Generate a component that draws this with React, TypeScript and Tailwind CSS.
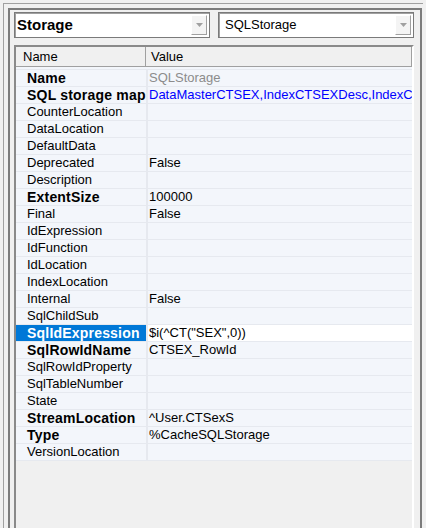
const rows = [
  { name: "Name", value: "SQLStorage", bold: true, tone: "grey" },
  { name: "SQL storage map", value: "DataMasterCTSEX,IndexCTSEXDesc,IndexCTSEXCode", bold: true, tone: "blue" },
  { name: "CounterLocation", value: "" },
  { name: "DataLocation", value: "" },
  { name: "DefaultData", value: "" },
  { name: "Deprecated", value: "False" },
  { name: "Description", value: "" },
  { name: "ExtentSize", value: "100000", bold: true },
  { name: "Final", value: "False" },
  { name: "IdExpression", value: "" },
  { name: "IdFunction", value: "" },
  { name: "IdLocation", value: "" },
  { name: "IndexLocation", value: "" },
  { name: "Internal", value: "False" },
  { name: "SqlChildSub", value: "" },
  { name: "SqlIdExpression", value: '$i(^CT("SEX",0))', bold: true, selected: true },
  { name: "SqlRowIdName", value: "CTSEX_RowId", bold: true },
  { name: "SqlRowIdProperty", value: "" },
  { name: "SqlTableNumber", value: "" },
  { name: "State", value: "" },
  { name: "StreamLocation", value: "^User.CTSexS", bold: true },
  { name: "Type", value: "%CacheSQLStorage", bold: true },
  { name: "VersionLocation", value: "" },
];

function Combo({ text, bold }: { text: string; bold?: boolean }) {
  return (
    <div className="flex h-[26px] flex-1 items-center border border-[#7a7a7a] bg-white pl-[2px] pr-[2px] shadow-[inset_1px_1px_0_#a0a0a0]">
      <span className={bold ? "flex-1 text-[15px] font-bold text-black" : "flex-1 pl-[4px] text-[13px] text-black"}>{text}</span>
      <div className="flex h-[20px] w-[16px] items-center justify-center border border-t-white border-l-white border-r-[#a0a0a0] border-b-[#a0a0a0] bg-[#f4f4f4]">
        <svg width="7" height="4" viewBox="0 0 7 4">
          <polygon points="0,0 7,0 3.5,4" fill="#a0a0a0" />
        </svg>
      </div>
    </div>
  );
}

export default function App() {
  return (
    <div className="h-[528px] w-[426px] overflow-hidden bg-[#f0f0f0] pl-[3px] pt-[3px] font-['Liberation_Sans',Arial,sans-serif] text-black">
      <div className="h-full w-[420px] border-l border-t border-[#a0a0a0] pl-[4px] pt-[4px]">
        <div className="h-full w-[414px] border-2 border-b-0 border-[#7c7c7c] pl-[4px] pr-[6px] pt-[2px]">
          <div className="flex gap-[8px]">
            <Combo text="Storage" bold />
            <Combo text="SQLStorage" />
          </div>

          <div className="mt-[7px] h-[600px] border-2 border-t-[#8a8a8a] border-l-[#8a8a8a] border-r-white border-b-white">
            <div className="flex h-[20px] border-b border-[#a0a0a0] bg-[#f0f0f0] text-[13px]">
              <div className="w-[130px] border-r border-[#a0a0a0] pl-[7px] leading-[19px]">Name</div>
              <div className="flex-1 border-r border-[#a0a0a0] pl-[5px] leading-[19px]">Value</div>
            </div>
            <div className="h-[2px] bg-[#f3f6fb]" />
            <div className="border-t border-[#e6e9ef]">
              {rows.map((r) => (
                <div key={r.name} className="flex h-[17px] border-b border-[#e6e9ef] bg-[#f3f6fb]">
                  <div
                    className={
                      "w-[130px] overflow-hidden whitespace-nowrap pl-[11px] leading-[16px] " +
                      (r.selected ? "bg-[#0078d7] text-white " : "") +
                      (r.bold ? "text-[14px] font-bold tracking-[0.2px]" : "text-[13px]")
                    }
                  >
                    {r.name}
                  </div>
                  <div className="w-[2px] bg-[#e6e9ef]" />
                  <div
                    className={
                      "flex-1 overflow-hidden whitespace-nowrap pl-[1px] text-[13px] leading-[16px] " +
                      (r.selected ? "bg-white " : "") +
                      (r.tone === "grey" ? "text-[#8c8c8c]" : r.tone === "blue" ? "text-[#0000ff]" : "text-black")
                    }
                  >
                    {r.value}
                  </div>
                </div>
              ))}
            </div>
          </div>
        </div>
      </div>
    </div>
  );
}
